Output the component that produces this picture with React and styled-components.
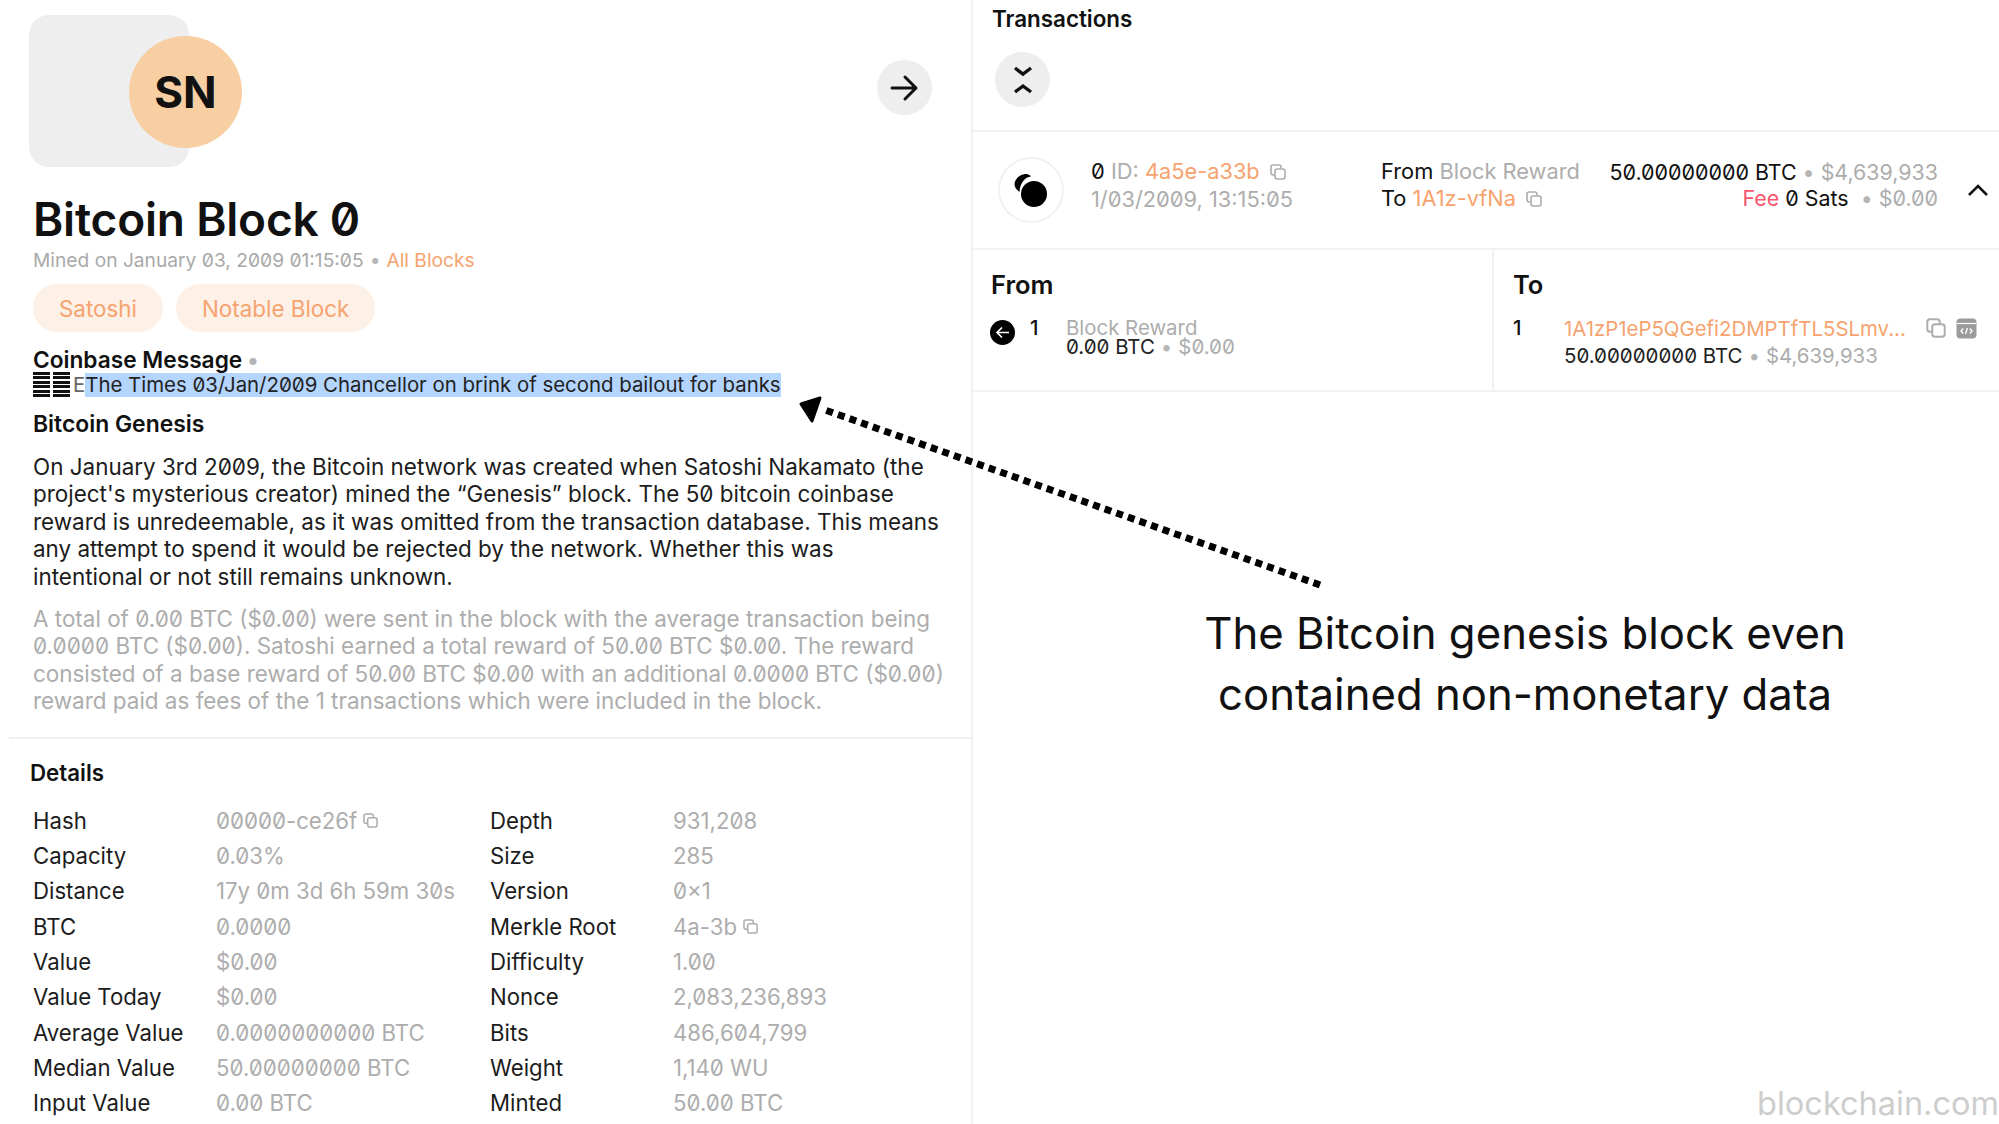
import React from 'react';
import styled, { createGlobalStyle } from 'styled-components';

const GlobalStyle = createGlobalStyle`
  html, body {
    margin: 0;
    padding: 0;
    background: #fff;
  }
  body {
    font-family: Inter, "Liberation Sans", sans-serif;
    font-feature-settings: "zero" 1;
    color: #111;
  }
`;

const Page = styled.div`
  position: relative;
  width: 1999px;
  height: 1124px;
  overflow: hidden;
  display: grid;
  grid-template-columns: 973px 1fr;
`;

const LeftPanel = styled.section`
  border-right: 2px solid #f1f1f1;
  height: 1124px;
  overflow: hidden;
`;

const Hero = styled.div`
  padding: 15px 39px 0 29px;
  display: flex;
  justify-content: space-between;
  align-items: flex-start;
  height: 152px;
`;

const AvatarBox = styled.div`
  width: 160px;
  height: 152px;
  border-radius: 20px;
  background: #eeeeee;
  padding: 21px 0 0 100px;
  box-sizing: border-box;
`;

const AvatarCircle = styled.div`
  width: 113px;
  height: 112px;
  border-radius: 50%;
  background: #f7cfa3;
  display: flex;
  align-items: center;
  justify-content: center;
  font-size: 44px;
  font-weight: 700;
`;

const RoundButton = styled.button`
  width: 55px;
  height: 55px;
  border: 0;
  padding: 0;
  border-radius: 50%;
  background: #eeeeee;
  color: #111;
  display: flex;
  align-items: center;
  justify-content: center;
  margin-top: ${(p) => p.$top || 0}px;
  margin-left: ${(p) => p.$left || 0}px;
`;

const Intro = styled.div`
  padding: 24px 30px 0 33px;
`;

const Title = styled.h1`
  margin: 0;
  font-size: 46px;
  line-height: 56px;
  font-weight: 600;
  letter-spacing: -0.2px;
`;

const Mined = styled.div`
  font-size: 19.2px;
  line-height: 24px;
  color: #a9a9a9;
  margin-top: 1px;
`;

const Link = styled.span`
  color: #f6a36f;
`;

const Tags = styled.div`
  display: flex;
  gap: 13px;
  margin-top: 12px;
`;

const Tag = styled.span`
  height: 48px;
  padding: 0 26px;
  border-radius: 24px;
  background: #fdf0e7;
  color: #f6a36f;
  font-size: 22.4px;
  display: flex;
  align-items: center;
`;

const MessageTitle = styled.div`
  margin-top: 16px;
  font-size: 22.7px;
  line-height: 24px;
  font-weight: 600;
`;

const Bullet = styled.span`
  color: #b5b5b5;
  margin: 0 ${(p) => p.$gap || 5}px;
`;

const MessageLine = styled.div`
  font-size: 20.4px;
  line-height: 24px;
  display: flex;
  align-items: center;
  color: #333;
`;

const Barcode = styled.span`
  display: inline-block;
  width: 17px;
  height: 25px;
  margin-right: 3px;
  background: repeating-linear-gradient(#111 0 3px, #fff 3px 4.4px);
`;

const Glitch = styled.span`
  color: #666;
`;

const Highlight = styled.span`
  background: #b4d5fe;
  color: #222;
`;

const Subhead = styled.h3`
  margin: 15px 0 0;
  font-size: 22.9px;
  line-height: 24px;
  font-weight: 600;
`;

const Body = styled.p`
  margin: ${(p) => p.$top}px 0 0;
  font-size: 22.45px;
  line-height: 27.4px;
  color: ${(p) => (p.$muted ? '#adadad' : '#1c1c1c')};
  width: 914px;
`;

const Divider = styled.div`
  height: 2px;
  margin: 22px 0 0 9px;
  background: #f1f1f1;
`;

const Details = styled.div`
  padding: 22px 0 0 30px;
`;

const DetailsTitle = styled.div`
  font-size: 22.3px;
  line-height: 24px;
  font-weight: 600;
`;

const DetailsGrid = styled.div`
  margin: 18px 0 0 3px;
  display: grid;
  grid-template-columns: 183px 274px 183px 1fr;
  grid-auto-rows: 35.3px;
  align-items: center;
  font-size: 22.2px;
`;

const Label = styled.span`
  color: #1c1c1c;
`;

const Value = styled.span`
  color: #adadad;
  display: flex;
  align-items: center;
  gap: 6px;
  white-space: nowrap;
`;

const RightPanel = styled.section`
  display: flex;
  flex-direction: column;
`;

const TxHeader = styled.div`
  padding: 7px 0 0 19px;
  box-sizing: content-box;
  border-bottom: 2px solid #f1f1f1;
  flex: none;
  height: 123px;
`;

const TxTitle = styled.div`
  font-size: 22.4px;
  line-height: 24px;
  font-weight: 600;
  margin-bottom: 21px;
`;

const TxSummary = styled.div`
  height: 116px;
  flex: none;
  border-bottom: 2px solid #f1f1f1;
  display: grid;
  grid-template-columns: 66px 317px 210px 1fr 61px;
  padding-left: 25px;
  align-items: center;
  font-size: 21.8px;
  line-height: 26.5px;
`;

const CoinCircle = styled.div`
  width: 66px;
  height: 66px;
  border: 2px solid #f1f1f1;
  border-radius: 50%;
  box-sizing: border-box;
  display: flex;
  align-items: center;
  justify-content: center;
`;

const TxCell = styled.div`
  padding: 0 0 10px ${(p) => p.$left || 0}px;
  text-align: ${(p) => (p.$end ? 'right' : 'left')};
  font-size: ${(p) => (p.$end ? '21.4px' : 'inherit')};
  white-space: nowrap;
`;

const Muted = styled.span`
  color: #adadad;
`;

const Fee = styled.span`
  color: #f9566d;
`;

const CopySlot = styled.span`
  display: inline-block;
  margin-left: 10px;
  vertical-align: -1px;
`;

const Chevron = styled.div`
  display: flex;
  justify-content: center;
  padding-left: 18px;
`;

const Flow = styled.div`
  height: 140px;
  flex: none;
  display: grid;
  grid-template-columns: 519px 1fr;
  border-bottom: 2px solid #f1f1f1;
`;

const FlowColumn = styled.div`
  padding: 21px 0 0 ${(p) => p.$pad}px;
  & + & {
    border-left: 2px solid #f1f1f1;
  }
`;

const FlowHeading = styled.div`
  font-size: 25.5px;
  line-height: 28px;
  font-weight: 600;
`;

const FlowRow = styled.div`
  margin-top: 19px;
  display: flex;
  font-size: 20.4px;
  align-items: flex-start;
`;

const BackIcon = styled.div`
  width: 25px;
  height: 25px;
  margin: 2px 15px 0 -1px;
  border-radius: 50%;
  background: #000;
  color: #fff;
  display: flex;
  align-items: center;
  justify-content: center;
`;

const RowIndex = styled.span`
  width: ${(p) => p.$w}px;
  line-height: 20px;
  font-weight: 500;
`;

const Stack = styled.div`
  flex: 1;
  min-width: 0;
`;

const SourceName = styled.div`
  color: #adadad;
  line-height: 19px;
`;

const Address = styled.div`
  display: flex;
  align-items: center;
  height: 20px;
  margin-bottom: 8px;
  color: #f6a36f;
`;

const AddressActions = styled.div`
  display: flex;
  gap: 10px;
  margin-left: 20px;
`;

const Amount = styled.div`
  line-height: 19px;
  color: #222;
`;

const Callout = styled.div`
  position: absolute;
  left: 1160px;
  top: 603px;
  width: 730px;
  text-align: center;
  font-size: 43.7px;
  line-height: 61px;
  color: #111;
`;

const ArrowOverlay = styled.svg`
  position: absolute;
  left: 780px;
  top: 380px;
`;

const Watermark = styled.div`
  position: absolute;
  right: 0;
  bottom: 0;
  font-size: 32.5px;
  line-height: 40px;
  color: #cdcdcd;
`;

const CopyIcon = ({ size = 16, color = '#adadad' }) => (
  <svg width={size} height={size} viewBox="0 0 16 16" fill="none" stroke={color} strokeWidth="1.6">
    <path d="M4.5 11H3.2C2 11 1 10 1 8.8V3.2C1 2 2 1 3.2 1h5.6C10 1 11 2 11 3.2v1.3" />
    <rect x="5" y="5" width="10" height="10" rx="2.2" />
  </svg>
);

const CodeIcon = () => (
  <svg width="21" height="21" viewBox="0 0 21 21">
    <rect x="0.5" y="0.5" width="20" height="20" rx="4" fill="#9b9b9b" />
    <path d="M1 5.5h19" stroke="#fff" strokeWidth="1.2" />
    <path d="M7.2 10.5 5 13l2.2 2.5M13.8 10.5 16 13l-2.2 2.5M11.4 10 9.6 16" fill="none" stroke="#fff" strokeWidth="1.3" />
  </svg>
);

const details = [
  ['Hash', '00000-ce26f', true, 'Depth', '931,208'],
  ['Capacity', '0.03%', false, 'Size', '285'],
  ['Distance', '17y 0m 3d 6h 59m 30s', false, 'Version', '0×1'],
  ['BTC', '0.0000', false, 'Merkle Root', '4a-3b', true],
  ['Value', '$0.00', false, 'Difficulty', '1.00'],
  ['Value Today', '$0.00', false, 'Nonce', '2,083,236,893'],
  ['Average Value', '0.0000000000 BTC', false, 'Bits', '486,604,799'],
  ['Median Value', '50.00000000 BTC', false, 'Weight', '1,140 WU'],
  ['Input Value', '0.00 BTC', false, 'Minted', '50.00 BTC'],
];

const App = () => (
  <>
    <GlobalStyle />
    <Page>
      <LeftPanel>
        <Hero>
          <AvatarBox>
            <AvatarCircle>SN</AvatarCircle>
          </AvatarBox>
          <RoundButton $top={45}>
            <svg width="32" height="32" viewBox="0 0 32 32" fill="none" stroke="#111" strokeWidth="3" strokeLinecap="round" strokeLinejoin="round">
              <path d="M3 16h24M16 5l11 11-11 11" />
            </svg>
          </RoundButton>
        </Hero>
        <Intro>
          <Title>Bitcoin Block 0</Title>
          <Mined>
            Mined on January 03, 2009 01:15:05<Bullet $gap={6}>•</Bullet><Link>All Blocks</Link>
          </Mined>
          <Tags>
            <Tag>Satoshi</Tag>
            <Tag>Notable Block</Tag>
          </Tags>
          <MessageTitle>Coinbase Message<Bullet $gap={5}>•</Bullet></MessageTitle>
          <MessageLine>
            <Barcode />
            <Barcode />
            <Glitch>E</Glitch>
            <Highlight>The Times 03/Jan/2009 Chancellor on brink of second bailout for banks</Highlight>
          </MessageLine>
          <Subhead>Bitcoin Genesis</Subhead>
          <Body $top={17}>
            On January 3rd 2009, the Bitcoin network was created when Satoshi Nakamato (the project's mysterious creator) mined the “Genesis” block. The 50 bitcoin coinbase reward is unredeemable, as it was omitted from the transaction database. This means any attempt to spend it would be rejected by the network. Whether this was intentional or not still remains unknown.
          </Body>
          <Body $muted $top={15}>
            A total of 0.00 BTC ($0.00) were sent in the block with the average transaction being 0.0000 BTC ($0.00). Satoshi earned a total reward of 50.00 BTC $0.00. The reward consisted of a base reward of 50.00 BTC $0.00 with an additional 0.0000 BTC ($0.00) reward paid as fees of the 1 transactions which were included in the block.
          </Body>
        </Intro>
        <Divider />
        <Details>
          <DetailsTitle>Details</DetailsTitle>
          <DetailsGrid>
            {details.map(([a, b, copyB, c, d, copyD]) => (
              <React.Fragment key={a}>
                <Label>{a}</Label>
                <Value>{b}{copyB && <CopyIcon size={15} />}</Value>
                <Label>{c}</Label>
                <Value>{d}{copyD && <CopyIcon size={15} />}</Value>
              </React.Fragment>
            ))}
          </DetailsGrid>
        </Details>
      </LeftPanel>
      <RightPanel>
        <TxHeader>
          <TxTitle>Transactions</TxTitle>
          <RoundButton $left={3}>
            <svg width="24" height="36" viewBox="0 0 24 36" fill="none" stroke="#111" strokeWidth="3.4">
              <path d="M4 6l8 6 8-6M4 30l8-6 8 6" />
            </svg>
          </RoundButton>
        </TxHeader>
        <TxSummary>
          <CoinCircle>
            <svg width="36" height="36" viewBox="0 0 36 36">
              <circle cx="21" cy="22" r="13" fill="#000" />
              <path d="M1.5 12C2 6 8 2 13 2c2 0 4 1 5 2.500C12 5 7 11 6.500 20 3.500 18 1.500 15 1.500 12z" fill="#000" />
            </svg>
          </CoinCircle>
          <TxCell $left={27}>
            <div>
              0 <Muted>ID: </Muted><Link>4a5e-a33b</Link>
              <CopySlot><CopyIcon /></CopySlot>
            </div>
            <Muted>1/03/2009, 13:15:05</Muted>
          </TxCell>
          <TxCell>
            <div>From <Muted>Block Reward</Muted></div>
            <div>
              To <Link>1A1z-vfNa</Link>
              <CopySlot><CopyIcon /></CopySlot>
            </div>
          </TxCell>
          <TxCell $end>
            <div>50.00000000 BTC<Bullet $gap={6}>•</Bullet><Muted>$4,639,933</Muted></div>
            <div><Fee>Fee</Fee> 0 Sats <Bullet $gap={6}>•</Bullet><Muted>$0.00</Muted></div>
          </TxCell>
          <Chevron>
            <svg width="22" height="14" viewBox="0 0 22 14" fill="none" stroke="#111" strokeWidth="2.6">
              <path d="M2 12l9-9 9 9" />
            </svg>
          </Chevron>
        </TxSummary>
        <Flow>
          <FlowColumn $pad={18}>
            <FlowHeading>From</FlowHeading>
            <FlowRow>
              <BackIcon>
                <svg width="15" height="15" viewBox="0 0 15 15" fill="none" stroke="#fff" strokeWidth="1.7">
                  <path d="M14 7.500H2M7 2.500l-5 5 5 5" />
                </svg>
              </BackIcon>
              <RowIndex $w={36}>1</RowIndex>
              <Stack>
                <SourceName>Block Reward</SourceName>
                <Amount>0.00 BTC<Bullet $gap={6}>•</Bullet><Muted>$0.00</Muted></Amount>
              </Stack>
            </FlowRow>
          </FlowColumn>
          <FlowColumn $pad={19}>
            <FlowHeading>To</FlowHeading>
            <FlowRow>
              <RowIndex $w={51}>1</RowIndex>
              <Stack>
                <Address>
                  1A1zP1eP5QGefi2DMPTfTL5SLmv...
                  <AddressActions>
                    <CopyIcon size={20} />
                    <CodeIcon />
                  </AddressActions>
                </Address>
                <Amount>50.00000000 BTC<Bullet $gap={6}>•</Bullet><Muted>$4,639,933</Muted></Amount>
              </Stack>
            </FlowRow>
          </FlowColumn>
        </Flow>
      </RightPanel>
      <ArrowOverlay width="560" height="220" viewBox="0 0 560 220" fill="none">
        <path d="M540 205 45 30" stroke="#000" strokeWidth="7" strokeDasharray="7 5.300" />
        <path d="M21 24 40 18 32 41z" fill="#000" stroke="#000" strokeWidth="3" strokeLinejoin="round" />
      </ArrowOverlay>
      <Callout>The Bitcoin genesis block even<br />contained non-monetary data</Callout>
      <Watermark>blockchain.com</Watermark>
    </Page>
  </>
);

export default App;
